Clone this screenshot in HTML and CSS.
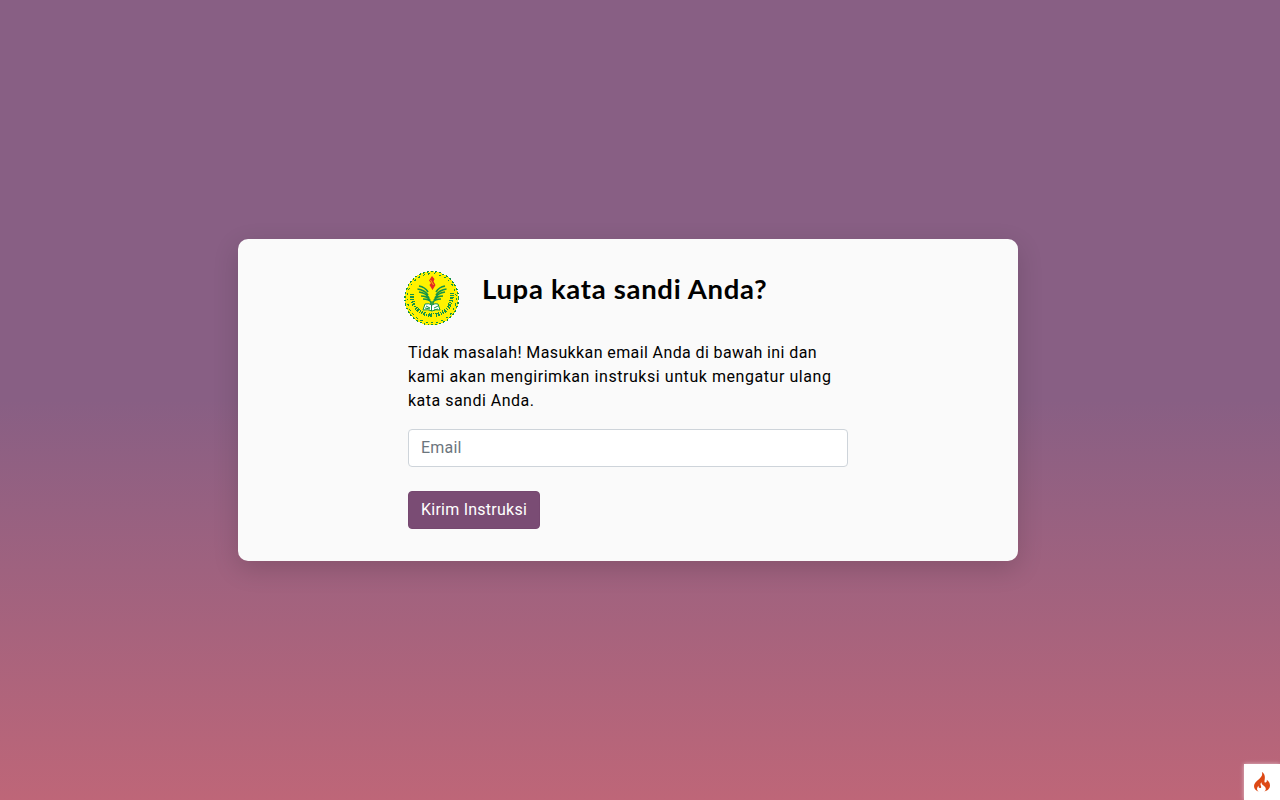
FILE: index.html
```html
<!DOCTYPE html>
<html lang="id">
<head>
<meta charset="utf-8">
<title>Lupa kata sandi</title>
<link rel="stylesheet" href="styles.css">
</head>
<body>
<main class="card">
  <div class="content">
    <header class="heading">
      <svg class="logo" viewBox="0 0 56 54" aria-hidden="true">
        <circle cx="27.700" cy="27.300" r="27" fill="#fff200" shape-rendering="crispEdges"/>
        <circle cx="27.700" cy="27.300" r="26.700" fill="none" stroke="#159447" stroke-width="1.300" stroke-dasharray="2 2" shape-rendering="crispEdges"/>
        <circle cx="27.700" cy="27.300" r="24.500" fill="none" stroke="#159447" stroke-width="1" stroke-dasharray="2 3.300" shape-rendering="crispEdges"/>
        <path d="M8 23C6 50 49 53 48 22" fill="none" stroke="#159447" stroke-width="3.500" stroke-dasharray="1.300 .8 2 1.100 .8 1.300" shape-rendering="crispEdges"/>
        <path d="M28 5l-3 4.500 2 2.500-1.500 2 3 5 3-5-2-3.500 1-2.500z" fill="#e52b20"/>
        <path d="M26.500 9l3 5" stroke="#fff200" stroke-width=".7"/>
        <g fill="none" stroke="#159447" stroke-width="1.7">
          <path d="M15 15q6 1 9 6M13.500 18q7 1 10.500 6M15 21q7 1 10 6M17 25q6 0 9 4M19 28q6 0 8 3v5"/>
          <path d="M41 15q-6 1-9 6M42.500 18q-7 1-10.500 6M41 21q-7 1-10 6M39 25q-6 0-9 4M37 28q-6 0-8 3v5"/>
        </g>
        <path d="M21 33q4-1 7 1 3-2 6-1l2 6q-5-1-8 1-4-2-9-1z" fill="#fff" stroke="#159447"/>
        <path d="M27.500 34v6M22 35l4 2M21 37l5 1M30 37l4-2M30 39l4-1" stroke="#159447"/>
      </svg>
      <h1 class="title">Lupa kata sandi Anda?</h1>
    </header>
    <p class="description"><span class="line line-one">Tidak masalah! Masukkan email Anda di bawah ini dan</span> <span class="line line-two">kami akan mengirimkan instruksi untuk mengatur ulang</span> <span class="line line-three">kata sandi Anda.</span></p>
    <form class="form">
      <input class="email" type="email" placeholder="Email" aria-label="Email">
      <button class="submit" type="button"><span class="submit-label">Kirim Instruksi</span></button>
    </form>
  </div>
</main>
<div class="debug-badge">
  <svg class="flame" viewBox="0 0 16 20" aria-hidden="true"><path d="M7.900 0c1 3-.3 4.600-2.700 6.900C2.100 9.500 0 11.300 0 14.100c0 2.700 1.800 4.800 4.800 5.700-1.300-1-1.900-2-1.700-3.300.1-1.200.8-1.900 1.500-2.700-.2 1.300.3 2.300 1.300 2.300 1.600 0 1.500-1.600.9-2.700-.6-1.200-.3-2.300.7-3.100-.1 2 1.200 2.600 2.800 3.900 2.300 2.100 1.900 4.500-.7 5.600 4-.8 6.400-3.100 6.400-6.200 0-2.500-1.100-4.300-3.300-5.800.4 1.300 0 2.400-.9 2.700-1 .3-1.500-.6-1.300-1.600C11.200 5.500 11.300 2 7.900 0z" fill="#dd4814"/></svg>
</div>
</body>
</html>
```
FILE: styles.css
```css
* { box-sizing: border-box; }
body {
  margin: 0;
  height: 100vh;
  padding-right: 24px;
  display: flex;
  align-items: center;
  justify-content: center;
  overflow: hidden;
  background: linear-gradient(#885f84 50%, #be6678);
  font: 16px/24px Roboto, "Liberation Sans", sans-serif;
  color: #000;
}
.card {
  width: 780px;
  height: 322px;
  padding: 32px 170px;
  border-radius: 10px;
  background: #fafafa;
  box-shadow: 0 8px 26px rgba(0, 0, 0, .15);
}
.heading { display: flex; height: 54px; margin-left: -4px; }
.logo { width: 56px; height: 54px; flex: none; }
.title {
  margin: 0 0 0 22px;
  font: 700 27.5px/35px Lato, sans-serif;
  letter-spacing: .69px;
  white-space: nowrap;
}
.description { margin: 16px 0; }
.line { display: block; white-space: nowrap; }
.line-one { letter-spacing: .39px; }
.line-two { letter-spacing: .56px; }
.line-three { letter-spacing: .49px; }
.form { display: flex; flex-direction: column; align-items: flex-start; gap: 24px; }
.email {
  width: 440px;
  height: 38px;
  padding: 5px 12px 7px;
  border: 1px solid #ced4da;
  border-radius: 4px;
  background: #fff;
  font: inherit;
  letter-spacing: .2px;
}
.email::placeholder { color: #6c757d; opacity: 1; }
.submit {
  width: 132px;
  height: 38px;
  padding: 0 12px;
  border: 1px solid #764870;
  border-radius: 4px;
  background: #7a4c74;
  color: #fff;
  font: inherit;
  letter-spacing: .24px;
  text-align: left;
  white-space: nowrap;
}
.debug-badge {
  position: fixed;
  right: 0;
  bottom: 0;
  width: 36px;
  height: 36px;
  padding: 8px 10px;
  background: #fff;
  box-shadow: 0 0 4px rgba(255, 255, 255, .6);
}
.flame { display: block; width: 16px; height: 20px; }
```
